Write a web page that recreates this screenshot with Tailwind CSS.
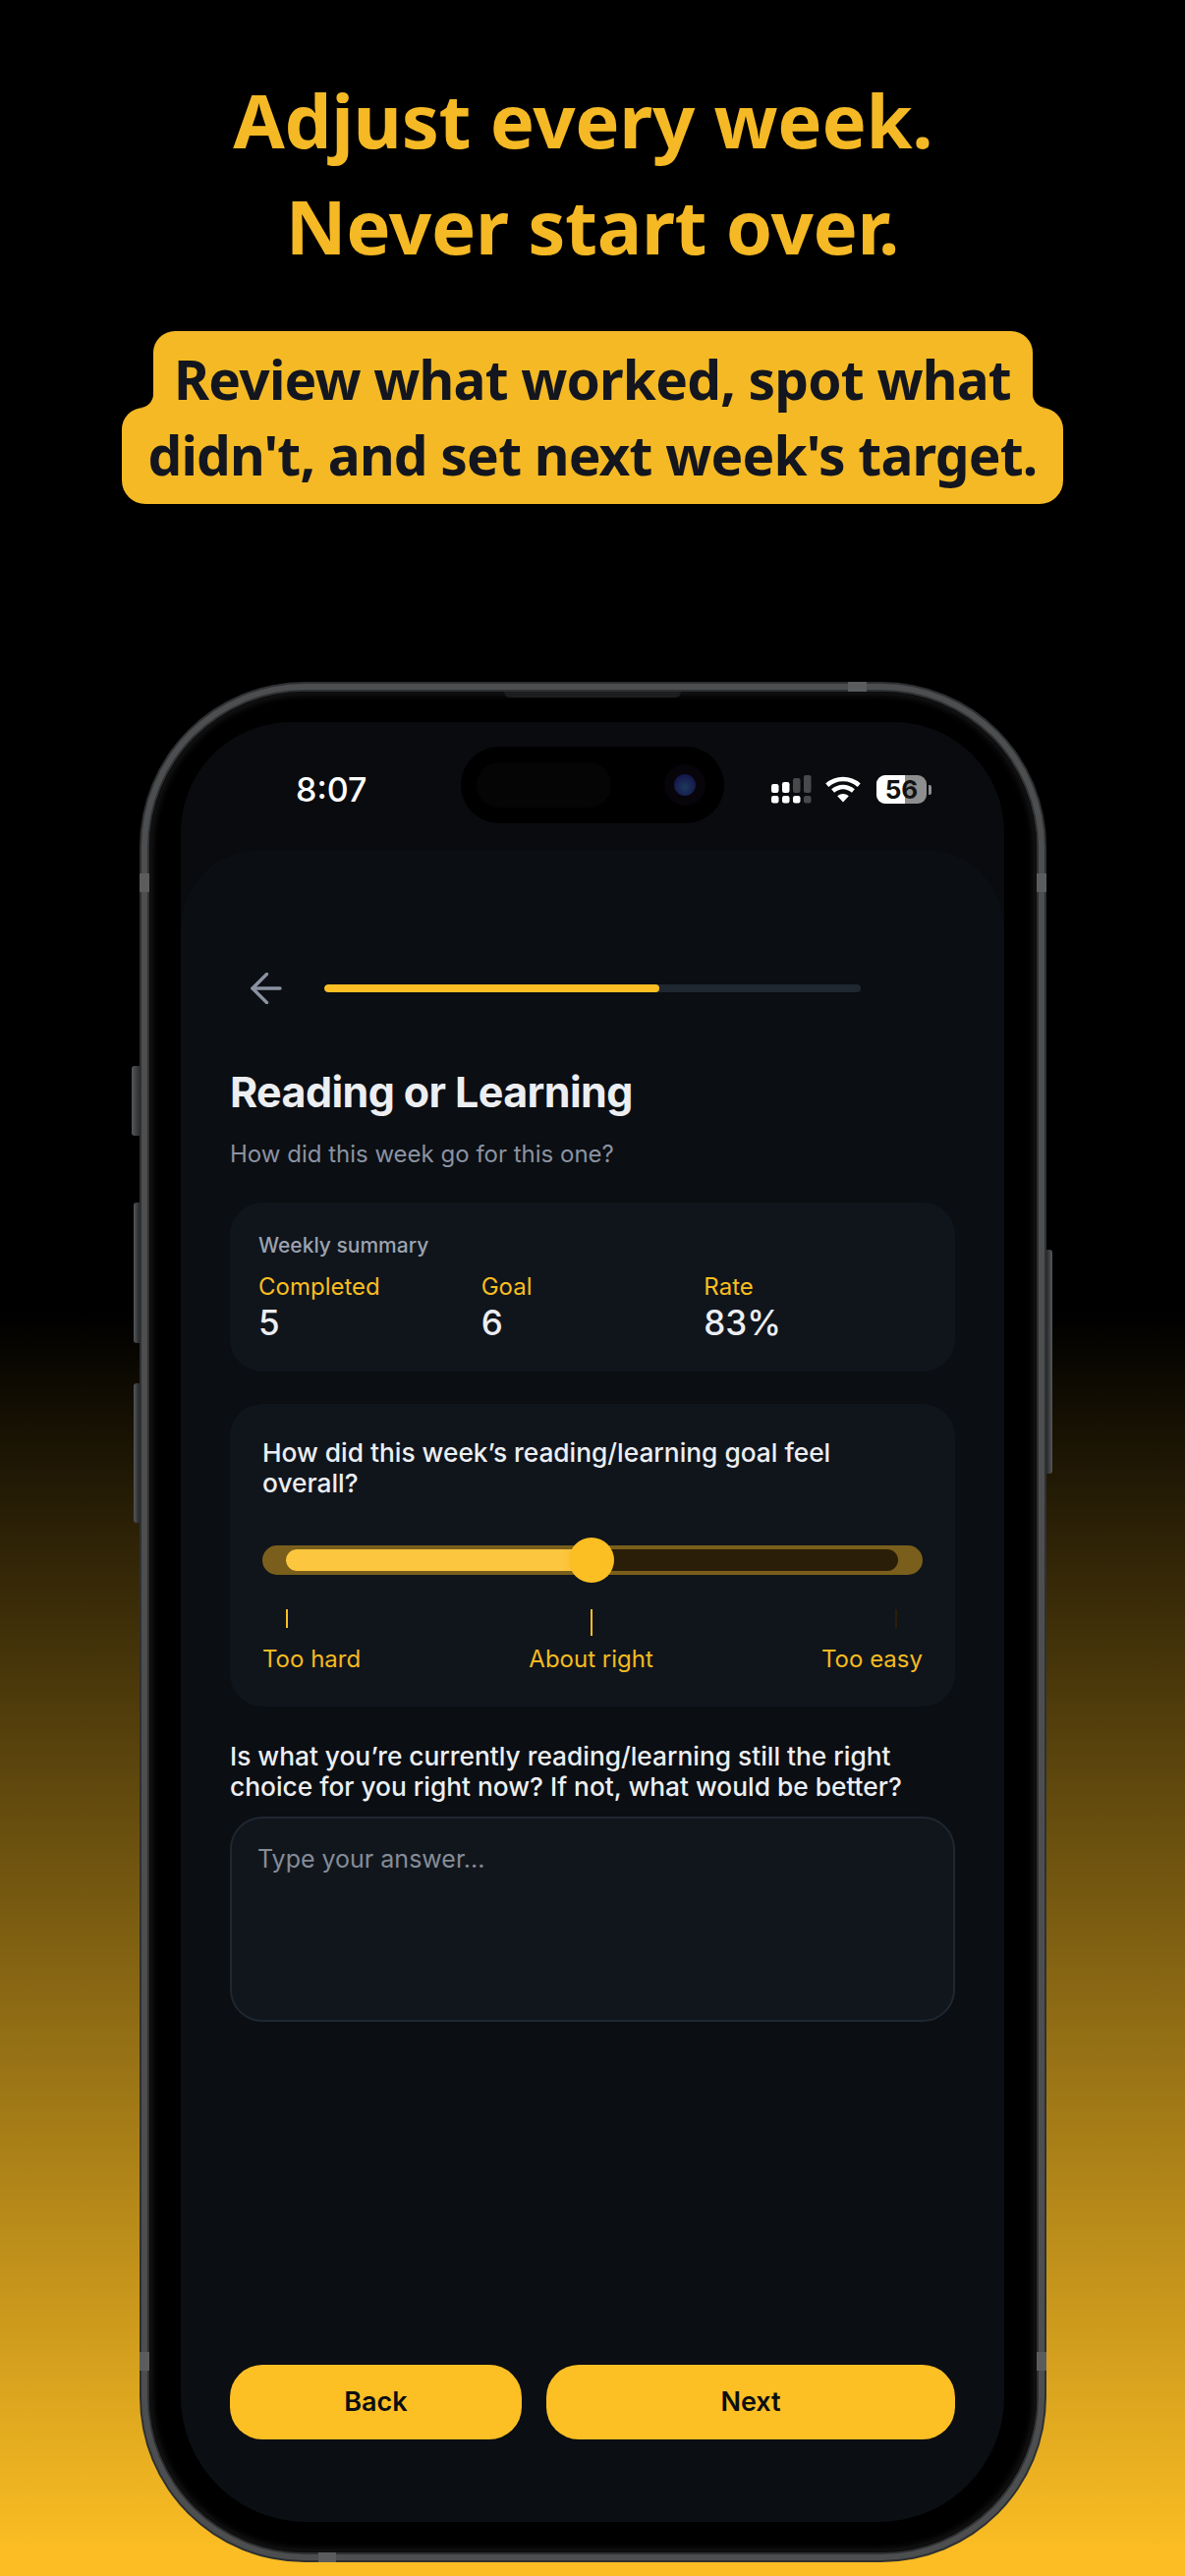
<!doctype html>
<html>
<head>
<meta charset="utf-8">
<script src="https://cdn.jsdelivr.net/npm/@tailwindcss/browser@4"></script>
</head>
<body class="m-0 bg-black">
<main class="relative w-[1206px] h-[2622px] overflow-hidden bg-[linear-gradient(to_bottom,#000_0%,#000_51%,#fbbd23_99%)] font-['Inter',sans-serif]">
  <header class="flex flex-col items-center pt-[68px]">
    <h1 class="text-center font-['Noto_Sans',sans-serif] font-bold text-[76px] tracking-[-0.3px] leading-[108px] text-[#f4b924]">Adjust every week.&nbsp;<br>Never start over.</h1>
    <div class="mt-[53px] flex flex-col items-center font-['Noto_Sans',sans-serif] font-bold text-[55px] tracking-[-0.8px] text-[#13161e] text-center">
      <div class="relative w-[895px] h-[78px] rounded-t-[22px] bg-[#f4b924] leading-[98px]">Review what worked, spot what
        <svg class="absolute -left-[14px] bottom-0 w-[14px] h-[14px]" viewBox="0 0 14 14"><path d="M14 0A14 14 0 0 1 0 14H14Z" fill="#f4b924"/></svg>
        <svg class="absolute -right-[14px] bottom-0 w-[14px] h-[14px]" viewBox="0 0 14 14"><path d="M0 0A14 14 0 0 0 14 14H0Z" fill="#f4b924"/></svg>
      </div>
      <div class="w-[958px] h-[98px] rounded-t-[22px] rounded-b-[24px] bg-[#f4b924] leading-[96px]">didn't, and set next week's target.</div>
    </div>
  </header>

  <section class="relative mt-[181px] ml-[142px] w-[923px] h-[1914px]">
    <!-- side buttons -->
    <span class="absolute -left-[8px] top-[391px] w-[8px] h-[71px] rounded-l-[3px] bg-[linear-gradient(to_right,#55585a,#2c2e30)]"></span>
    <span class="absolute -left-[6px] top-[530px] w-[6px] h-[143px] rounded-l-[3px] bg-[linear-gradient(to_right,#55585a,#26282a)]"></span>
    <span class="absolute -left-[6px] top-[714px] w-[6px] h-[142px] rounded-l-[3px] bg-[linear-gradient(to_right,#55585a,#26282a)]"></span>
    <span class="absolute -right-[6px] top-[578px] w-[6px] h-[228px] rounded-r-[3px] bg-[linear-gradient(to_left,#55585a,#26282a)]"></span>

    <div class="relative w-full h-full rounded-[168px] bg-[#2e3032] p-[2px]">
      <div class="h-full rounded-[166px] bg-[#4c4e50] p-[6px]">
        <div class="h-full rounded-[160px] bg-[#2e3032] p-[2px]">
          <div class="h-full rounded-[158px] bg-black shadow-[inset_0_0_0_1px_#0c0c0c,inset_0_0_7px_3px_rgba(120,120,120,.22)] pl-[32px] pt-[31px]">
            <div class="relative h-[1832px] w-[838px] overflow-hidden rounded-t-[112px] rounded-b-[128px] bg-[#090b0e]">
              <!-- status bar -->
              <div class="relative h-[130px]">
                <span class="absolute left-[117px] top-[48px] font-medium text-[34px] leading-[41px] text-white">8:07</span>
                <div class="absolute left-[285px] top-[25px] w-[268px] h-[78px] rounded-full bg-black">
                  <span class="absolute left-[16px] top-[16px] w-[137px] h-[46px] rounded-full bg-[#050505]"></span>
                  <span class="absolute left-[207px] top-[18px] w-[42px] h-[42px] rounded-full bg-[#07040a]"></span>
                  <span class="absolute left-[217px] top-[28px] w-[22px] h-[22px] rounded-full bg-[radial-gradient(circle_at_50%_60%,#1d3a5c,#14174a_70%)]"></span>
                </div>
                <!-- signal -->
                <svg class="absolute left-[601px] top-[54px] w-[41px] h-[30px]" viewBox="0 0 41 30">
                  <g fill="#fff">
                    <rect x="0" y="9" width="7.5" height="9" rx="2.2"/><rect x="11" y="7" width="7.5" height="11" rx="2.2"/>
                    <rect x="0" y="21" width="7.5" height="7.5" rx="2.2"/><rect x="11" y="21" width="7.5" height="7.5" rx="2.2"/><rect x="22" y="21" width="7.5" height="7.5" rx="2.2"/>
                  </g>
                  <g fill="#48494b">
                    <rect x="22" y="3" width="7.5" height="15" rx="2.2"/><rect x="33" y="0" width="7.5" height="18" rx="2.2"/><rect x="33" y="21" width="7.5" height="7.5" rx="2.2"/>
                  </g>
                </svg>
                <!-- wifi -->
                <svg class="absolute left-[656px] top-[55px] w-[36px] h-[27px]" viewBox="0 0 36 27" fill="none" stroke="#fff" stroke-width="4.6">
                  <path d="M1.8 9.2C11 1 25 1 34.2 9.2"/>
                  <path d="M7.6 15C14 9.6 22 9.6 28.4 15"/>
                  <path d="M12.2 20.2L18 26.6L23.8 20.2C20 17.4 16 17.4 12.2 20.2Z" fill="#fff" stroke="none"/>
                </svg>
                <!-- battery -->
                <div class="absolute left-[708px] top-[54px] flex items-center">
                  <div class="relative w-[51px] h-[29px] overflow-hidden rounded-[9px] bg-[#8e8e8e]">
                    <span class="absolute left-0 top-0 h-full w-[29px] bg-white"></span>
                    <span class="absolute inset-0 text-center font-bold text-[26px] leading-[29px] text-[#111]">56</span>
                  </div>
                  <span class="ml-[2px] w-[3px] h-[10px] rounded-r-[2px] bg-[#8e8e8e]"></span>
                </div>
              </div>

              <!-- sheet -->
              <div class="flex flex-col h-[1702px] rounded-t-[80px] bg-[#0b0e12] px-[50px] pb-[84px]">
                <div class="flex items-center h-[40px] mt-[121px]">
                  <svg class="ml-[21px] w-[32px] h-[32px]" viewBox="0 0 32 32" fill="none" stroke="#8a92a2" stroke-width="3.4" stroke-linecap="round" stroke-linejoin="round"><path d="M30 16H2"/><path d="M16.5 1.5L2 16L16.5 30.5"/></svg>
                  <div class="ml-[43px] w-[546px] h-[8px] rounded-full bg-[#1f2731] overflow-hidden">
                    <div class="w-[341px] h-full rounded-full bg-[#fbbf24]"></div>
                  </div>
                </div>
                <h2 class="mt-[59px] font-bold text-[43px] tracking-[-0.6px] leading-[52px] text-[#eceef2]">Reading or Learning</h2>
                <p class="mt-[20px] text-[24px] leading-[36px] text-[#8a92a2]">How did this week go for this one?</p>

                <div class="mt-[31px] h-[172px] rounded-[33px] bg-[#10151c] px-[29px] pt-[29px]">
                  <p class="font-medium text-[21px] leading-[30px] text-[#9ca3af]">Weekly summary</p>
                  <div class="mt-[10px] grid grid-cols-3">
                    <div><p class="text-[24px] leading-[33px] text-[#f8bd20]">Completed</p><p class="font-medium text-[35px] leading-[40px] text-[#eceef2]">5</p></div>
                    <div><p class="text-[24px] leading-[33px] text-[#f8bd20]">Goal</p><p class="font-medium text-[35px] leading-[40px] text-[#eceef2]">6</p></div>
                    <div><p class="text-[24px] leading-[33px] text-[#f8bd20]">Rate</p><p class="font-medium text-[35px] leading-[40px] text-[#eceef2]">83%</p></div>
                  </div>
                </div>

                <div class="mt-[33px] h-[308px] rounded-[33px] bg-[#10151c] px-[33px] pt-[34px]">
                  <p class="font-medium text-[26.3px] leading-[31px] text-[#eceef2]">How did this week’s reading/learning goal feel overall?</p>
                  <div class="relative mt-[48px] h-[30px] rounded-full bg-[#7a5f1c]">
                    <div class="absolute left-[24px] right-[25px] top-[4px] h-[22px] rounded-full bg-[#2b1e08] overflow-hidden">
                      <div class="h-full w-[311px] bg-[linear-gradient(to_right,#fcc63f_90%,#f5b92c)]"></div>
                    </div>
                    <span class="absolute left-[312px] -top-[8px] w-[46px] h-[46px] rounded-full bg-[#fbbf24]"></span>
                  </div>
                  <div class="relative mt-[35px] h-[34px]">
                    <span class="absolute left-[24px] top-0 w-[2px] h-[19px] bg-[#fbbf24]"></span>
                    <span class="absolute left-[334px] top-0 w-[2px] h-[27px] bg-[#fbbf24]"></span>
                    <span class="absolute left-[644px] top-0 w-[2px] h-[19px] bg-[#2b1e08]"></span>
                  </div>
                  <div class="flex justify-between text-[24px] leading-[33px] text-[#f5bb20]">
                    <span>Too hard</span><span>About right</span><span>Too easy</span>
                  </div>
                </div>

                <p class="mt-[35px] font-medium text-[26.3px] leading-[31px] text-[#eceef2]">Is what you’re currently reading/learning still the right choice for you right now? If not, what would be better?</p>
                <div class="mt-[15px] h-[209px] rounded-[33px] border-2 border-[#1f2731] bg-[#11161d] px-[26px] pt-[23px] text-[25px] leading-[37px] text-[#858c98]">Type your answer...</div>

                <div class="mt-auto flex gap-[25px]">
                  <button class="w-[297px] h-[76px] rounded-[33px] bg-[#fcbf24] font-semibold text-[27px] text-[#0b0e12]">Back</button>
                  <button class="flex-1 h-[76px] rounded-[33px] bg-[#fcbf24] font-semibold text-[27px] text-[#0b0e12]">Next</button>
                </div>
              </div>
            </div>
          </div>
        </div>
      </div>
      <!-- antenna bands -->
      <span class="absolute top-0 left-[721px] w-[19px] h-[10px] bg-[#5a5c5e]"></span>
      <span class="absolute left-0 top-[195px] w-[10px] h-[19px] bg-[#5a5c5e]"></span>
      <span class="absolute right-0 top-[195px] w-[10px] h-[19px] bg-[#5a5c5e]"></span>
      <span class="absolute left-0 top-[1700px] w-[10px] h-[19px] bg-[#5a5c5e]"></span>
      <span class="absolute right-0 top-[1700px] w-[10px] h-[19px] bg-[#5a5c5e]"></span>
      <span class="absolute bottom-0 left-[182px] w-[18px] h-[10px] bg-[#5a5c5e]"></span>
      <span class="absolute top-[10px] left-[371px] w-[180px] h-[6px] rounded-b-[6px] bg-[#1c1d1e]"></span>
    </div>
  </section>
</main>
</body>
</html>
